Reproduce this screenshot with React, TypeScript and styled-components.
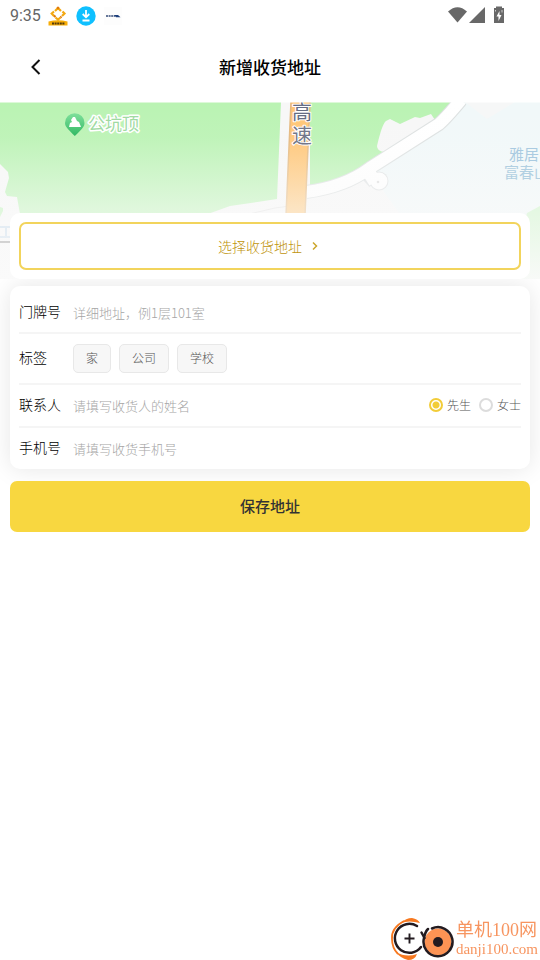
import React, { useState } from "react";
import styled, { createGlobalStyle } from "styled-components";

const sans = `"Noto Sans CJK SC", "Noto Sans", sans-serif`;

const GlobalStyle = createGlobalStyle`
  * { box-sizing: border-box; }
  body { margin: 0; background: #fff; font-family: ${sans}; color: #222; }
  button, input { font-family: inherit; }
`;

const Page = styled.div`
  min-height: 100vh;
  overflow: hidden;
  display: flex;
  flex-direction: column;
`;

const StatusBar = styled.div`
  display: flex;
  align-items: center;
  justify-content: space-between;
  height: 32px;
  padding: 0 35px 0 10px;
`;

const StatusGroup = styled.div<{ $gap: number }>`
  display: flex;
  align-items: center;
  gap: ${(p) => p.$gap}px;
`;

const Clock = styled.span`
  font: 400 16px/20px Roboto, sans-serif;
  color: #666;
`;

const Header = styled.header`
  display: grid;
  grid-template-columns: 52px 1fr 52px;
  align-items: center;
  height: 70px;
`;

const BackButton = styled.button`
  display: flex;
  justify-content: flex-end;
  padding: 8px 10px;
  border: 0;
  background: none;
`;

const Title = styled.h1`
  margin: 0;
  text-align: center;
  font-size: 17px;
  line-height: 24px;
  font-weight: 500;
  color: #000;
`;

const MapSection = styled.section`
  position: relative;
  padding: 111px 10px 0;
`;

const MapCanvas = styled.svg`
  position: absolute;
  inset: 0;
  width: 100%;
  height: 100%;
  font-family: ${sans};
`;

const PickerCard = styled.div`
  position: relative;
  padding: 9px;
  border-radius: 10px;
  background: #fff;
`;

const PickerButton = styled.button`
  display: flex;
  align-items: center;
  justify-content: center;
  gap: 10px;
  width: 100%;
  height: 48px;
  padding: 0 4px 0 0;
  border: 2px solid #f2d45c;
  border-radius: 7px;
  background: #fff;
  font-size: 14px;
  line-height: 20px;
  font-weight: 300;
  color: #c0940c;
`;

const Content = styled.main`
  display: flex;
  flex-direction: column;
  gap: 12px;
  padding: 7px 10px;
`;

const FormCard = styled.form`
  padding: 6px 9px 0;
  border-radius: 10px;
  background: #fff;
  box-shadow: 0 0 24px rgba(0, 0, 0, 0.1);
`;

const Row = styled.div<{ $height: number }>`
  display: flex;
  align-items: center;
  height: ${(p) => p.$height}px;
  & + & { border-top: 2px solid #f5f5f5; }
`;

const labelText = `
  flex: none;
  width: 54px;
  padding-bottom: 3px;
  font-size: 14px;
  line-height: 20px;
  font-weight: 300;
  color: #000;
`;
const Label = styled.label`${labelText}`;
const GroupLabel = styled.span`${labelText}`;

const Field = styled.input`
  flex: 1;
  min-width: 0;
  height: 24px;
  padding: 0;
  border: 0;
  outline: 0;
  background: none;
  font-size: 13px;
  font-weight: 300;
  color: #222;
  &::placeholder { color: #a6a6a6; opacity: 1; }
`;

const Tags = styled.div`
  display: flex;
  gap: 8px;
`;

const Tag = styled.button<{ $active: boolean }>`
  height: 29px;
  padding: 0 12px 2px;
  border: 1px solid ${(p) => (p.$active ? "#f2cf3c" : "#e8e8e8")};
  border-radius: 5px;
  background: #f7f7f7;
  font-size: 12px;
  line-height: 18px;
  font-weight: 300;
  color: #555;
`;

const Radios = styled.div`
  display: flex;
  gap: 8px;
  padding-bottom: 2px;
`;

const RadioLabel = styled.label`
  display: flex;
  align-items: center;
  gap: 4px;
  font-size: 12px;
  line-height: 18px;
  font-weight: 300;
  color: #555;
`;

const Radio = styled.input`
  appearance: none;
  width: 14px;
  height: 14px;
  margin: 0;
  border: 2px solid #dcdcdc;
  border-radius: 50%;
  background: #fff;
  &:checked {
    border-color: #f2cc38;
    background: radial-gradient(circle, #f2cc38 0 3px, #fff 4px);
  }
`;

const SaveButton = styled.button`
  position: relative;
  height: 51px;
  padding: 0 0 2px;
  border: 0;
  border-radius: 7px;
  background: #f8d740;
  font-size: 15px;
  line-height: 22px;
  font-weight: 500;
  color: #333;
`;

const Watermark = styled.div`
  position: fixed;
  right: 2px;
  bottom: 0;
  display: flex;
  align-items: center;
  gap: 2px;
  color: #f79560;
  font-family: "Liberation Serif", "Noto Sans CJK SC", serif;
`;

const SiteName = styled.div`
  font-size: 18px;
  line-height: 20px;
`;

const SiteUrl = styled.div`
  font-size: 15px;
  line-height: 18px;
`;

function StoreIcon() {
  return (
    <svg width="20" height="20" viewBox="0 0 20 20" aria-hidden="true">
      <path d="M7 5 10 2 13 5M14.500 5.500 16.500 7.500 14 10M12.500 11.500 10 13.500 7.500 11.500M6 10 3.700 7.500 6 5.500" fill="none" stroke="#f3a812" strokeWidth="2.200" />
      <path d="M9 2.500 10 1.800 11 2.500M13.500 10.500 12.500 11.500M6 9.500 7.500 11" fill="none" stroke="#e0760d" strokeWidth="2" />
      <path d="M.5 15.500Q10 13 19.500 15.500V19.500H.5Z" fill="#f7ad08" />
      <path d="M4 17.500H17" stroke="#553b0c" strokeWidth="1.800" strokeDasharray="2 .6" />
    </svg>
  );
}

function DownloadIcon() {
  return (
    <svg width="20" height="20" viewBox="0 0 20 20" aria-hidden="true">
      <circle cx="10" cy="10" r="9.700" fill="#0fc0ff" />
      <path d="M10 4V11M6.700 8 10 11.300 13.300 8M6.500 14.500H13.500" fill="none" stroke="#fff" strokeWidth="1.800" />
    </svg>
  );
}

function BrandIcon() {
  return (
    <svg width="18" height="18" viewBox="0 0 18 18" aria-hidden="true">
      <path d="M0 0H18V18H0Z" fill="#fdfdfd" />
      <path d="M2 9H11" stroke="#667799" strokeWidth="2" strokeDasharray="2 .6" />
      <path d="M10 8H14L16.500 10.300H12Z" fill="#1d3f7c" />
    </svg>
  );
}

function SystemIcons() {
  return (
    <svg width="57" height="20" viewBox="0 0 57 20" fill="#686868" aria-hidden="true">
      <path d="M0 5.500Q9.500-3 19 5.500L9.500 16.500Z" />
      <path d="M37 1V17H21Z" />
      <path d="M46 2H48V.5H54V2H56V17H46Z" />
      <path d="M51.500 5 48.500 10.500H50.500V15L53.500 9H51.500Z" fill="#fff" />
      <path d="M47.500 4V5.500M54 4V6.500" stroke="#ccc" />
    </svg>
  );
}

function MapArt() {
  return (
    <MapCanvas viewBox="0 0 540 177" preserveAspectRatio="xMidYMin slice" role="img" aria-label="地图">
      <defs>
        <linearGradient id="fade" x1="0" y1="0" x2="0" y2="1">
          <stop offset="0" stopColor="#fafafa" stopOpacity="0" />
          <stop offset=".2" stopColor="#fafafa" stopOpacity=".08" />
          <stop offset=".6" stopColor="#fafafa" stopOpacity=".58" />
          <stop offset="1" stopColor="#fafafa" stopOpacity=".96" />
        </linearGradient>
        <linearGradient id="pin" x1="0" y1="0" x2="0" y2="1">
          <stop offset="0" stopColor="#7fe09b" />
          <stop offset="1" stopColor="#32b964" />
        </linearGradient>
      </defs>
      <path d="M0 0H540V177H0Z" fill="#baf3b3" />
      <path d="M0 62 8 70 9 76 5 90 7 94 17 95 20 112V177H0Z" fill="#f7f7f7" />
      <path d="M0 105 3 106 3 109 0 115Z" fill="#baf3b3" />
      <path d="M205 113 230 104 277 97 281 0H310V83H540V177H180Z" fill="#f7f7f7" />
      <path d="M452 0 433 22 367 64Q340 81 306 84V177H540V0Z" fill="#f7f7f7" />
      <path d="M463 0H540V140H420L400 112 384 90 375 70 440 25Z" fill="#f1f8f9" />
      <path d="M465 0 487 17 515 0Z" fill="#f6f7f7" />
      <path d="M386 19 390 17 396 20 400 22 415 15 420 16 431 12 435 18 433 22 384 50Q377 49 377 44Q382 22 386 19Z" fill="#f7f7f7" />
      <path d="M527 111 540 104V177H510Z" fill="#c6f5c0" />
      <path d="M245 113 275 106 290 104" fill="none" stroke="#e2e2e2" />
      <path d="M366 70 375 80" stroke="#dfe2e3" strokeWidth="15" />
      <circle cx="379" cy="79" r="9.500" fill="#dfe2e3" />
      <path d="M461-2Q446 16 439 22L370 66Q345 85 306 90" fill="none" stroke="#dde1e1" strokeWidth="14" />
      <path d="M366 66 375 80" stroke="#fff" strokeWidth="13" />
      <path d="M461-2Q446 16 439 22L370 66Q345 85 306 90" fill="none" stroke="#fff" strokeWidth="12" />
      <circle cx="379" cy="79" r="8.500" fill="#fff" />
      <circle cx="378" cy="80" r="1.300" fill="#ddd" />
      <path d="M291 0H310L305 113H286Z" fill="#ffc574" />
      <path d="M291 0 286 113M310 0 305 113" fill="none" stroke="#e4b77c" strokeWidth="1.500" />
      <path d="M0 125H20M0 135H20M6 125V135" fill="none" stroke="#b4cfe5" strokeWidth="2" />
      <path d="M0 140H20" stroke="#555" strokeWidth="2" />
      <path d="M0 0H540V177H0Z" fill="url(#fade)" />
      <path d="M0 0H540V1H0Z" fill="#fff" opacity=".5" />
      <path d="M65 21A9.700 9.700 0 1 1 84.500 21C84.500 25 81 28 74.800 34C69 28 65 25 65 21Z" fill="url(#pin)" />
      <path d="M69 25 70 21 72 20 71 18 73 15 75 15 77 19 79 20 81 25Z" fill="#fff" />
      <g paintOrder="stroke" stroke="#fff" strokeLinejoin="round">
        <text x="88" y="28" fontSize="17" strokeWidth="3" fill="#a0daa2">公坑顶</text>
        <text x="292" y="18" fontSize="20" strokeWidth="2" fill="#666d83">高</text>
        <text x="292" y="41" fontSize="20" strokeWidth="2" fill="#737789">速</text>
      </g>
      <text x="509" y="58" fontSize="15" fill="#aacbe1">雅居</text>
      <text x="504" y="76" fontSize="15" fill="#b2d0e2">富春山</text>
    </MapCanvas>
  );
}

function WatermarkLogo() {
  return (
    <svg width="64" height="42" viewBox="0 0 64 42" aria-hidden="true">
      <path d="M14 3Q1 10 2 21Q2 30 8 36" fill="none" stroke="#f7781f" strokeWidth="1.800" />
      <path d="M11 5Q16 0 22 0Q28 1 30 5Q19 2 11 5Z" fill="#f7781f" />
      <path d="M6 34Q16 40 27 36Q25 42 18 42Q10 40 6 34Z" fill="#f7781f" />
      <path d="M27 8A14.500 14.500 0 1 0 31 29" fill="none" stroke="#231b20" strokeWidth="2.500" strokeLinecap="round" />
      <path d="M19.500 15.500V25.500M14.500 20.500H24.500" stroke="#231b20" strokeWidth="1.900" />
      <circle cx="48" cy="24" r="13.500" fill="#fc9354" />
      <path d="M42 10.500A14.500 14.500 0 1 1 34 20Q35 14 38 11" fill="none" stroke="#231b20" strokeWidth="2.500" strokeLinecap="round" />
      <path d="M31.500 14.500 34.500 20" stroke="#231b20" strokeWidth="2.500" strokeLinecap="round" />
      <circle cx="48" cy="24" r="5" fill="#231b20" />
    </svg>
  );
}

const TAGS = ["家", "公司", "学校"];
const TITLES = ["先生", "女士"];

export default function App() {
  const [tag, setTag] = useState("");
  const [title, setTitle] = useState("先生");

  return (
    <Page>
      <GlobalStyle />
      <StatusBar>
        <StatusGroup $gap={7}>
          <Clock>9:35</Clock>
          <StatusGroup $gap={8}>
            <StoreIcon />
            <DownloadIcon />
            <BrandIcon />
          </StatusGroup>
        </StatusGroup>
        <SystemIcons />
      </StatusBar>
      <Header>
        <BackButton type="button" aria-label="返回">
          <svg width="12" height="18" viewBox="0 0 12 18" aria-hidden="true">
            <path d="M9.500 2 2.500 9 9.500 16" fill="none" stroke="#111" strokeWidth="2" />
          </svg>
        </BackButton>
        <Title>新增收货地址</Title>
      </Header>
      <MapSection>
        <MapArt />
        <PickerCard>
          <PickerButton type="button">
            选择收货地址
            <svg width="6" height="10" viewBox="0 0 6 10" aria-hidden="true">
              <path d="M1 1.500 4.500 5 1 8.500" fill="none" stroke="#cca62c" strokeWidth="1.500" />
            </svg>
          </PickerButton>
        </PickerCard>
      </MapSection>
      <Content>
        <FormCard id="address" onSubmit={(e) => e.preventDefault()}>
          <Row $height={40}>
            <Label htmlFor="door">门牌号</Label>
            <Field id="door" placeholder="详细地址，例1层101室" />
          </Row>
          <Row $height={51} role="group" aria-labelledby="tag-label">
            <GroupLabel id="tag-label">标签</GroupLabel>
            <Tags>
              {TAGS.map((t) => (
                <Tag key={t} type="button" $active={t === tag} aria-pressed={t === tag} onClick={() => setTag(t)}>
                  {t}
                </Tag>
              ))}
            </Tags>
          </Row>
          <Row $height={43}>
            <Label htmlFor="contact">联系人</Label>
            <Field id="contact" placeholder="请填写收货人的姓名" />
            <Radios>
              {TITLES.map((t) => (
                <RadioLabel key={t}>
                  <Radio type="radio" name="title" checked={t === title} onChange={() => setTitle(t)} />
                  {t}
                </RadioLabel>
              ))}
            </Radios>
          </Row>
          <Row $height={43}>
            <Label htmlFor="phone">手机号</Label>
            <Field id="phone" type="tel" placeholder="请填写收货手机号" />
          </Row>
        </FormCard>
        <SaveButton type="submit" form="address">保存地址</SaveButton>
      </Content>
      <Watermark>
        <WatermarkLogo />
        <div>
          <SiteName>单机100网</SiteName>
          <SiteUrl>danji100.com</SiteUrl>
        </div>
      </Watermark>
    </Page>
  );
}
